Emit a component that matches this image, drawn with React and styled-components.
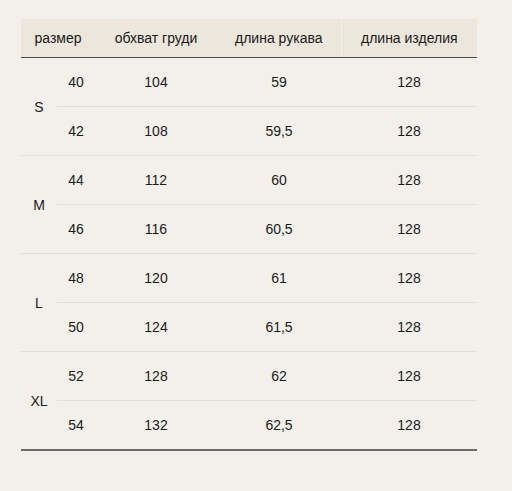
import React from "react";
import styled, { createGlobalStyle } from "styled-components";

const GlobalStyle = createGlobalStyle`
  body {
    margin: 0;
    background: #f3f0eb;
    font-family: "Liberation Sans", Arial, sans-serif;
    color: #1a1a1a;
  }
`;

const Page = styled.div`
  padding: 19px 0 0 21px;
  height: 491px;
  box-sizing: border-box;
  overflow: hidden;
`;

const Table = styled.table`
  width: 456px;
  border-collapse: collapse;
  table-layout: fixed;
  font-size: 14px;
`;

const Col = styled.col`
  width: ${(p) => p.$w}px;
`;

const HeadCell = styled.th`
  height: 38px;
  padding: 0;
  background: #ede6dc;
  font-weight: normal;
  text-align: center;
  border-bottom: 1px solid #4a4a4a;
  border-left: ${(p) => (p.$divider ? "1px solid #f4f0ea" : "none")};
`;

const Cell = styled.td`
  height: 48px;
  padding: 0;
  text-align: center;
  border-bottom: ${(p) => (p.$last ? "2px solid #6a6a6a" : "1px solid #e2ddd6")};
`;

const Caption = styled.div`
  margin: 38px 0 0 106px;
  font-size: 16px;
  color: #333;
`;

const colWidths = [36, 38, 122, 124, 136];

const sizes = [
  { name: "S", rows: [["40", "104", "59", "128"], ["42", "108", "59,5", "128"]] },
  { name: "M", rows: [["44", "112", "60", "128"], ["46", "116", "60,5", "128"]] },
  { name: "L", rows: [["48", "120", "61", "128"], ["50", "124", "61,5", "128"]] },
  { name: "XL", rows: [["52", "128", "62", "128"], ["54", "132", "62,5", "128"]] },
];

const App = () => (
  <Page>
    <GlobalStyle />
    <Table>
      <colgroup>
        {colWidths.map((w, i) => (
          <Col key={i} $w={w} />
        ))}
      </colgroup>
      <thead>
        <tr>
          <HeadCell colSpan={2}>размер</HeadCell>
          <HeadCell>обхват груди</HeadCell>
          <HeadCell>длина рукава</HeadCell>
          <HeadCell $divider>длина изделия</HeadCell>
        </tr>
      </thead>
      <tbody>
        {sizes.map((size, gi) => {
          const lastGroup = gi === sizes.length - 1;
          return size.rows.map((row, ri) => {
            const last = lastGroup && ri === 1;
            return (
              <tr key={size.name + ri}>
                {ri === 0 && (
                  <Cell rowSpan={2} $last={lastGroup}>
                    {size.name}
                  </Cell>
                )}
                {row.map((v, ci) => (
                  <Cell key={ci} $last={last}>
                    {v}
                  </Cell>
                ))}
              </tr>
            );
          });
        })}
      </tbody>
    </Table>
    <Caption>Т</Caption>
  </Page>
);

export default App;
